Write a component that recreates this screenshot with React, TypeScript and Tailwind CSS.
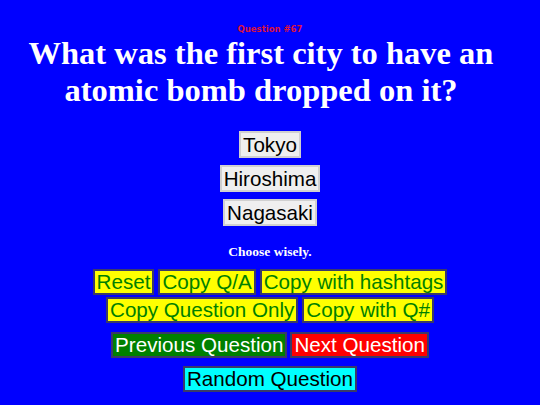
import React from 'react';

const btn = "border-2 border-[#3a3a6a] px-[2px] text-[20.6px] font-['Liberation_Sans',Arial,sans-serif]";

export default function App() {
  return (
    <div className="w-[540px] h-[405px] bg-[#0000ff] flex flex-col items-center overflow-hidden">
      <div className="mt-[24px] text-[8.5px] leading-[10px] font-bold text-[#dc143c] font-['DejaVu_Sans',Verdana,sans-serif]">
        Question #67
      </div>
      <h1 className="mt-[1px] pr-[18px] text-center text-white font-bold text-[32.5px] leading-[37px] font-['Liberation_Serif','Times_New_Roman',serif]">
        What was the first city to have an
        <br />
        atomic bomb dropped on it?
      </h1>
      <div className="mt-[22px] flex flex-col items-center gap-[7px]">
        <button className={`${btn} leading-[23px] bg-[#efefef] text-black border-[#d0d0d0]`}>Tokyo</button>
        <button className={`${btn} leading-[23px] bg-[#efefef] text-black border-[#d0d0d0]`}>Hiroshima</button>
        <button className={`${btn} leading-[23px] bg-[#efefef] text-black border-[#d0d0d0]`}>Nagasaki</button>
      </div>
      <div className="mt-[18px] text-white font-bold text-[13.5px] leading-[16px] font-['Liberation_Serif','Times_New_Roman',serif]">
        Choose wisely.
      </div>
      <div className="mt-[9px] flex flex-col items-center gap-[2px]">
        <div className="flex gap-[4px]">
          <button className={`${btn} leading-[22px] bg-[#ffff00] text-[#008000]`}>Reset</button>
          <button className={`${btn} leading-[22px] bg-[#ffff00] text-[#008000]`}>Copy Q/A</button>
          <button className={`${btn} leading-[22px] bg-[#ffff00] text-[#008000]`}>Copy with hashtags</button>
        </div>
        <div className="flex gap-[4px]">
          <button className={`${btn} leading-[22px] bg-[#ffff00] text-[#008000]`}>Copy Question Only</button>
          <button className={`${btn} leading-[22px] bg-[#ffff00] text-[#008000]`}>Copy with Q#</button>
        </div>
      </div>
      <div className="mt-[9px] flex gap-[3px]">
        <button className={`${btn} leading-[22px] bg-[#008000] text-white`}>Previous Question</button>
        <button className={`${btn} leading-[22px] bg-[#ff0000] text-white`}>Next Question</button>
      </div>
      <div className="mt-[8px]">
        <button className={`${btn} leading-[22px] bg-[#00ffff] text-black`}>Random Question</button>
      </div>
    </div>
  );
}
